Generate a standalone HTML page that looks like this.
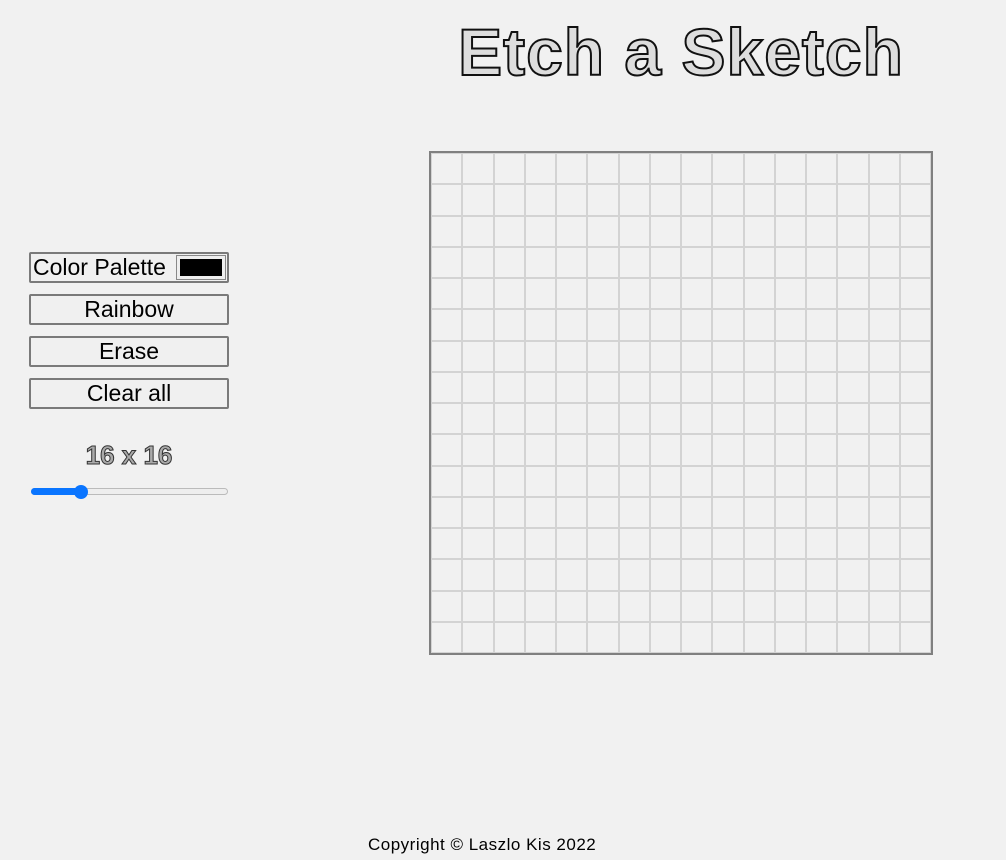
<!DOCTYPE html>
<html><head><style>
body{margin:0;background:#f1f1f1;width:1006px;height:860px;position:relative;overflow:hidden;font-family:"Liberation Sans",sans-serif}
h1{position:absolute;left:380px;width:602px;top:14px;margin:0;text-align:center;white-space:nowrap;font:bold 66px "Liberation Sans",sans-serif;color:#ddd;-webkit-text-stroke:2px #111;letter-spacing:1px}
.btn{position:absolute;left:29px;width:200px;height:31px;box-sizing:border-box;border:2px solid #7a7a7a;border-radius:2px;background:#f0f0f0;font-size:23px;text-align:center;line-height:27px;color:#000}
.sw{position:absolute;right:1px;top:1px;width:50px;height:25px;box-sizing:border-box;border:1px solid #888;background:#eee;padding:3px}
.sw div{background:#000;width:100%;height:100%}
#grid{position:absolute;left:429px;top:151px;width:500px;height:500px;border:2px solid #808080;display:grid;grid-template-columns:repeat(16,1fr);grid-template-rows:repeat(16,1fr)}
#grid div{border:1px solid #d3d3d3}
.size{position:absolute;left:29px;width:200px;top:440px;text-align:center;font:bold 26px "Liberation Sans",sans-serif;color:#aaa;-webkit-text-stroke:1px #333}
.track{position:absolute;left:31px;top:488px;width:197px;height:7px;border:1px solid #bbb;border-radius:4px;box-sizing:border-box;background:#eee}
.fill{position:absolute;left:31px;top:488px;width:50px;height:7px;border-radius:4px;background:#0a75ff}
.thumb{position:absolute;left:74px;top:485px;width:14px;height:14px;border-radius:50%;background:#0a75ff}
.foot{position:absolute;left:368px;top:835px;font-size:17px;letter-spacing:0.5px;color:#000}
</style></head><body>
<h1>Etch a Sketch</h1>
<div class="btn" style="top:252px;text-align:left;padding-left:2px">Color Palette<div class="sw"><div></div></div></div>
<div class="btn" style="top:294px">Rainbow</div>
<div class="btn" style="top:336px">Erase</div>
<div class="btn" style="top:378px">Clear all</div>
<div class="size">16 x 16</div>
<div class="track"></div><div class="fill"></div><div class="thumb"></div>
<div id="grid"></div>
<div class="foot">Copyright © Laszlo Kis 2022</div>
<script>
var g=document.getElementById('grid');for(var i=0;i<256;i++)g.appendChild(document.createElement('div'));
</script>
</body></html>
